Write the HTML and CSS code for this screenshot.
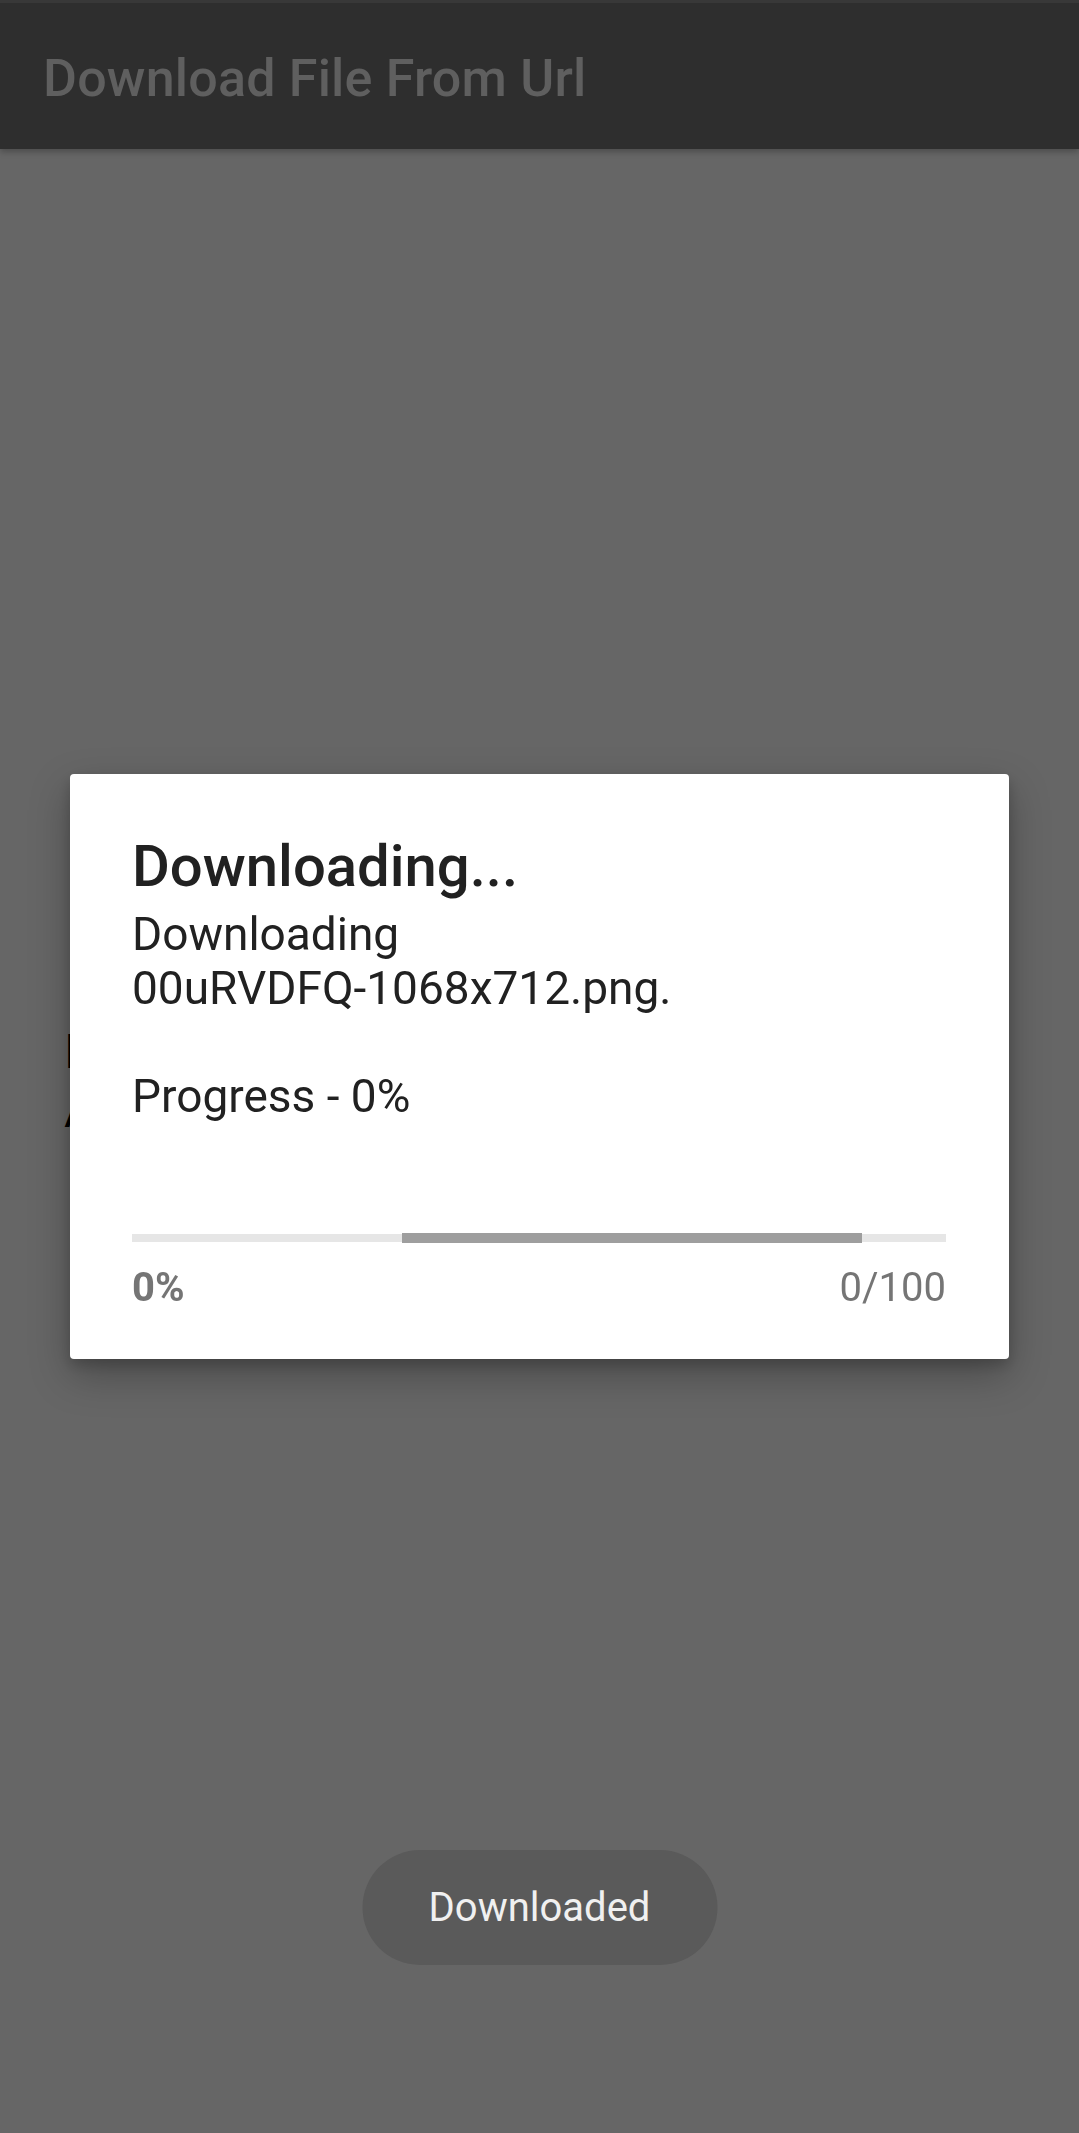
FILE: index.html
```html
<!DOCTYPE html>
<html lang="en">
	<head>
		<meta charset="utf-8" />
		<title>Download File From Url</title>
		<meta name="viewport" content="width=device-width, initial-scale=1" />
		<link rel="stylesheet" href="styles.css">
	</head>
	<body>
		<header class="appbar">
			<h1 class="appbar-title">Download File From Url</h1>
		</header>

		<main class="content">
			<p class="status">Image Downloaded<br>At /storage/emulated/0/Download</p>
		</main>

		<!-- dialog sits over the dimmed page -->
		<div class="scrim">
			<div class="dialog">
				<h2 class="dialog-title">Downloading...</h2>
				<p class="dialog-message">Downloading<br>00uRVDFQ-1068x712.png.<br><br>Progress - 0%</p>
				<div class="progress">
					<div class="progress-bar"></div>
				</div>
				<div class="progress-labels">
					<span class="percent">0%</span>
					<span class="count">0/100</span>
				</div>
			</div>
		</div>

		<div class="toast">Downloaded</div>
	</body>
</html>
```

FILE: styles.css
```css
* { box-sizing: border-box; }

html,
body {
	margin: 0;
	height: 100%;
}

body {
	font-family: Roboto, "Noto Sans", sans-serif;
	background: #666666;
	overflow: hidden;
}

.appbar {
	height: 149px;
	background: #2e2e2e;
	border-top: 3px solid #383838;
	display: flex;
	align-items: center;
	padding: 4px 43px 0;
	box-shadow: 0 3px 6px rgba(0, 0, 0, 0.25);
}

.appbar-title {
	margin: 0;
	font-size: 52px;
	font-weight: 500;
	color: #5f5f5f;
	letter-spacing: 0.2px;
}

.content {
	padding: 873px 0 0 64px;
}

.status {
	margin: 0;
	font-size: 48px;
	line-height: 59px;
	color: #000;
}

.scrim {
	position: fixed;
	inset: 0;
	display: flex;
	align-items: center;
	justify-content: center;
}

.dialog {
	width: 939px;
	height: 585px;
	background: #fff;
	border-radius: 4px;
	padding: 58px 63px 0 62px;
	box-shadow: 0 16px 40px rgba(0, 0, 0, 0.28), 0 6px 14px rgba(0, 0, 0, 0.18);
}

.dialog-title {
	margin: 0;
	font-size: 58px;
	font-weight: 500;
	line-height: 68px;
	color: #212121;
}

.dialog-message {
	margin: 7px 0 0;
	font-size: 46px;
	line-height: 54px;
	color: #212121;
}

.progress {
	margin-top: 111px;
	height: 8px;
	background: #e6e6e6;
	position: relative;
}

.progress-bar {
	position: absolute;
	top: -1px;
	bottom: -1px;
	left: 270px;
	width: 460px;
	background: #9e9e9e;
}

.progress-labels {
	display: flex;
	justify-content: space-between;
	margin-top: 20px;
	font-size: 40px;
	line-height: 52px;
	color: #757575;
}

.percent {
	font-weight: 700;
}

.toast {
	position: fixed;
	left: 50%;
	bottom: 168px;
	transform: translateX(-50%);
	width: 355px;
	height: 115px;
	border-radius: 58px;
	background: #5a5a5a;
	color: #f0f0f0;
	font-size: 40px;
	display: flex;
	align-items: center;
	justify-content: center;
}
```
